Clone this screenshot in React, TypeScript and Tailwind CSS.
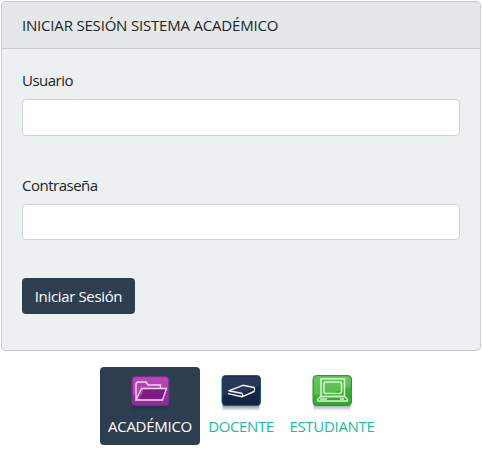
import { ReactNode } from "react";
import { clsx } from "clsx";

const FolderIcon = () => (
  <svg width="40" height="38" viewBox="0 0 40 38" fill="none">
    <defs>
      <linearGradient id="folderBg" x1="0" y1="0" x2="0" y2="1">
        <stop offset="0" stopColor="#a83aa9" />
        <stop offset="0.5" stopColor="#a02da2" />
        <stop offset="1" stopColor="#8f2c94" />
      </linearGradient>
      <linearGradient id="folderShade" x1="0" y1="0" x2="0" y2="1">
        <stop offset="0" stopColor="#20364f" />
        <stop offset="1" stopColor="#2c3e50" />
      </linearGradient>
    </defs>
    <rect x="3" y="31" width="34" height="6" fill="url(#folderShade)" />
    <rect x="2" y="1.5" width="37" height="29" rx="3.5" fill="url(#folderBg)" stroke="#742d82" />
    <path d="M3 4.5Q3 2.5 5 2.5H36Q38 2.5 38 4.5V12Q24 20 3 20Z" fill="#c457c2" opacity="0.5" />
    <path d="M10 24L14 13.5H36L32.5 24Z" fill="#7d1d83" />
    <path d="M6 25V8.5L7.5 7H16L18 10H30.5V13.5M6 25L11.5 13.5H36.5L32.5 25Z" stroke="#f2d5f0" strokeWidth="1.4" />
  </svg>
);

const BookIcon = () => (
  <svg width="40" height="38" viewBox="0 0 40 38" fill="none">
    <defs>
      <linearGradient id="bookBg" x1="0" y1="0" x2="0" y2="1">
        <stop offset="0" stopColor="#172b4c" />
        <stop offset="0.6" stopColor="#1a2446" />
        <stop offset="1" stopColor="#0c2547" />
      </linearGradient>
      <linearGradient id="bookShade" x1="0" y1="0" x2="0" y2="1">
        <stop offset="0" stopColor="#7d8794" />
        <stop offset="1" stopColor="#ffffff" />
      </linearGradient>
    </defs>
    <rect x="1.5" y="30" width="37" height="6" fill="url(#bookShade)" />
    <rect x="1" y="0.5" width="38.5" height="30" rx="3.5" fill="url(#bookBg)" stroke="#176078" />
    <path d="M2 4Q2 1.5 5 1.5H36Q38.5 1.5 38.5 4V11Q22 20 2 20Z" fill="#344562" opacity="0.55" />
    <path
      d="M7.5 15.8L22 10.3L33 12.5Q34.5 14.5 33 16.5L21 21.8L7 18.6M7.5 15.8L20.5 18.2Q22.5 19.5 21 21.8"
      stroke="#f0f3f6"
      strokeWidth="1.4"
      strokeLinejoin="round"
    />
  </svg>
);

const ComputerIcon = () => (
  <svg width="40" height="38" viewBox="0 0 40 38" fill="none">
    <defs>
      <linearGradient id="pcBg" x1="0" y1="0" x2="0" y2="1">
        <stop offset="0" stopColor="#4dbb47" />
        <stop offset="0.5" stopColor="#3cae35" />
        <stop offset="1" stopColor="#35a52f" />
      </linearGradient>
      <linearGradient id="pcShade" x1="0" y1="0" x2="0" y2="1">
        <stop offset="0" stopColor="#98a9b5" />
        <stop offset="1" stopColor="#ffffff" />
      </linearGradient>
    </defs>
    <rect x="1.5" y="30" width="37" height="6" fill="url(#pcShade)" />
    <rect x="1" y="0.5" width="38.5" height="30" rx="3.5" fill="url(#pcBg)" stroke="#36933a" />
    <path d="M2 4Q2 1.5 5 1.5H36Q38.5 1.5 38.5 4V11Q22 20 2 20Z" fill="#8add78" opacity="0.4" />
    <rect x="9" y="3.8" width="23.5" height="17.7" stroke="#d7f4cf" strokeWidth="1.5" />
    <rect x="12" y="7" width="17.5" height="11.5" rx="2" stroke="#d7f4cf" strokeWidth="1.5" />
    <path d="M8.5 21.5H32.5L35.5 24.5V26H5.5V24.5ZM8 24H15M28 24H32" stroke="#d7f4cf" strokeWidth="1.3" />
  </svg>
);

interface NavItemProps {
  icon: ReactNode;
  label: string;
  active?: boolean;
  className: string;
}

const NavItem = ({ icon, label, active, className }: NavItemProps) => (
  <a
    href="#"
    className={clsx(
      "h-[78px] pt-2 flex flex-col items-center rounded whitespace-nowrap leading-[22px]",
      active ? "bg-[#2c3e50] text-white" : "text-[#18bc9c]",
      className
    )}
  >
    {icon}
    <span className="mt-0.5">{label}</span>
  </a>
);

export default function App() {
  return (
    <div className="min-h-screen bg-white pt-px px-px font-['Open_Sans','Noto_Sans',sans-serif] text-[15px] text-[#212529]">
      <div className="h-[350px] rounded border border-[#c9cfd1] bg-[#ecf0f1] overflow-hidden">
        <div className="h-[47px] pt-px px-5 border-b border-[#c6cbcc] bg-[#e4e8e8] flex items-center whitespace-nowrap">
          <span className="tracking-[-0.19px]">INICIAR SESIÓN SISTEMA ACADÉMICO</span>
        </div>
        <form className="px-5 pt-5" onSubmit={(e) => e.preventDefault()}>
          <label htmlFor="usuario" className="block h-[30px] leading-[22px] tracking-[-0.5px]">
            Usuario
          </label>
          <input id="usuario" type="text" className="block w-full h-[37px] px-3 rounded border border-[#ced4da] bg-white" />
          <label htmlFor="contrasena" className="block h-[30px] mt-[38px] leading-[22px] tracking-[-0.5px]">
            Contraseña
          </label>
          <input id="contrasena" type="password" className="block w-full h-9 px-3 rounded border border-[#ced4da] bg-white" />
          <button type="submit" className="mt-[38px] w-[113px] h-9 rounded bg-[#2c3e50] text-white whitespace-nowrap tracking-[-0.35px]">
            Iniciar Sesión
          </button>
        </form>
      </div>
      <nav className="mt-4 flex justify-center">
        <NavItem icon={<FolderIcon />} label="ACADÉMICO" active className="w-[100px] tracking-[-0.27px]" />
        <NavItem icon={<BookIcon />} label="DOCENTE" className="w-[82px] tracking-[-0.4px]" />
        <NavItem icon={<ComputerIcon />} label="ESTUDIANTE" className="w-[100px] tracking-[-0.3px]" />
      </nav>
    </div>
  );
}
